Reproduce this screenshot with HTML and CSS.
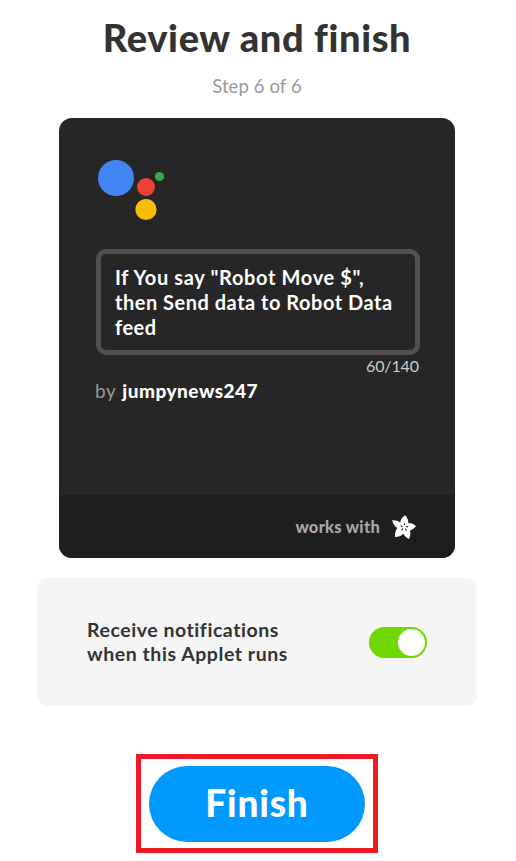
FILE: index.html
```html
<!DOCTYPE html>
<html lang="en">
<head>
<meta charset="utf-8">
<title>Review and finish</title>
<link rel="stylesheet" href="styles.css">
</head>
<body>
<main class="page">
  <h1 class="title">Review and finish</h1>
  <p class="step">Step 6 of 6</p>
  <section class="card">
    <div class="card-body">
      <svg class="assistant" width="68" height="62" viewBox="0 0 68 62" aria-hidden="true">
        <circle cx="20" cy="19" r="18" fill="#4285f4"/>
        <circle cx="50" cy="28" r="9" fill="#ea4335"/>
        <circle cx="63.5" cy="17.5" r="4.6" fill="#34a853"/>
        <circle cx="50" cy="50.5" r="10.6" fill="#fbbc05"/>
      </svg>
      <div class="description"><span class="opening">If You say "Robot Move $",</span><br>then Send data to Robot Data<br>feed</div>
      <div class="count">60/140</div>
      <div class="author"><span class="by">by</span><strong>jumpynews247</strong></div>
    </div>
    <footer class="card-footer">
      <span class="works">works with</span>
      <svg class="flower" width="24" height="24" viewBox="0 0 24 24" aria-hidden="true">
        <path fill="#fff" d="M13.200.2C10.200 2.300 8.500 4.500 8.200 7.500C6 5.700 3.500 5.100.1 5.300C1.200 9 2.800 11.600 5.400 13.100C3.500 15.400 2.800 18.200 3 22C6.500 21.900 9.200 20.800 11.300 18.700C12.700 21.300 14.500 22.900 17.200 23.900C18.400 20.700 18.700 18.200 18 15.500C20.500 14.600 22.400 13.400 24 11C21.600 8.800 19.200 7.800 16.300 7.900C16.300 5 15.500 2.600 13.200.2Z"/>
        <g fill="#1e1e1e">
          <ellipse cx="12.500" cy="9.100" rx=".6" ry="1.200" transform="rotate(8 12.500 9.100)"/>
          <ellipse cx="15.100" cy="11.600" rx="1.300" ry=".6" transform="rotate(-8 15.100 11.600)"/>
          <ellipse cx="13.900" cy="14.700" rx=".6" ry="1.200" transform="rotate(-24 13.900 14.700)"/>
          <ellipse cx="10.300" cy="14.400" rx=".6" ry="1.300" transform="rotate(40 10.300 14.400)"/>
          <ellipse cx="9.500" cy="11.300" rx="1.300" ry=".6" transform="rotate(27 9.500 11.300)"/>
        </g>
      </svg>
    </footer>
  </section>
  <section class="notify">
    <p class="notify-text">Receive notifications<br>when this Applet runs</p>
    <div class="toggle" role="switch" aria-checked="true"><div class="knob"></div></div>
  </section>
  <div class="highlight"><button class="finish">Finish</button></div>
</main>
</body>
</html>
```
FILE: styles.css
```css
* { box-sizing: border-box; }
body { margin: 0; background: #fff; font-family: Lato, sans-serif; font-variant-ligatures: none; color: #333; }
.page { width: 514px; height: 861px; display: flex; flex-direction: column; align-items: center; overflow: hidden; white-space: nowrap; }
.title { margin: 15px 0 0; font-size: 38px; line-height: 44px; font-weight: 900; letter-spacing: .65px; }
.step { margin: 15px 0 0; font-size: 18.500px; line-height: 24px; color: #999; letter-spacing: .1px; }
.card { width: 396px; height: 440px; margin-top: 20px; border-radius: 13px; background: #262626; overflow: hidden; display: flex; flex-direction: column; }
.card-body { height: 377px; padding: 41px 35px 0 37px; }
.assistant { display: block; }
.description { height: 106px; margin-top: 28px; border: 5px solid #505050; border-radius: 10px; padding: 11px 14px 9px; color: #fff; font-size: 20px; line-height: 25px; font-weight: 700; letter-spacing: .51px; }
.opening { letter-spacing: .65px; }
.count { margin-top: 1px; padding-right: 1px; text-align: right; color: #ccc; font-size: 16px; line-height: 20px; letter-spacing: -.1px; }
.author { margin-top: 3px; margin-left: -1px; display: flex; gap: 6px; font-size: 19px; line-height: 24px; color: #fff; }
.author strong { font-weight: 900; letter-spacing: .5px; }
.by { color: #999; font-weight: 400; letter-spacing: .5px; }
.card-footer { height: 63px; padding-right: 39px; background: #1e1e1e; display: flex; align-items: center; justify-content: flex-end; gap: 12px; }
.works { color: #a8a8a8; font-size: 16.500px; line-height: 20px; font-weight: 900; letter-spacing: .25px; }
.notify { width: 440px; height: 128px; margin-top: 20px; padding: 0 50px; border-radius: 10px; background: #f5f5f5; display: flex; align-items: center; justify-content: space-between; }
.notify-text { margin: 0; font-size: 19.500px; line-height: 24px; font-weight: 700; letter-spacing: .55px; }
.toggle { width: 58px; height: 31px; padding: 2px; border-radius: 16px; background: #6fd800; display: flex; justify-content: flex-end; }
.knob { width: 27px; height: 27px; border-radius: 50%; background: #fff; }
.highlight { width: 242px; height: 99px; margin-top: 48px; border: 5px solid #ed1c24; display: flex; align-items: center; justify-content: center; }
.finish { width: 216px; height: 76px; padding: 0 0 2px; border: 0; border-radius: 38px; background: #09f; color: #fff; font-family: inherit; font-size: 37px; line-height: 44px; font-weight: 900; letter-spacing: .8px; }
```
